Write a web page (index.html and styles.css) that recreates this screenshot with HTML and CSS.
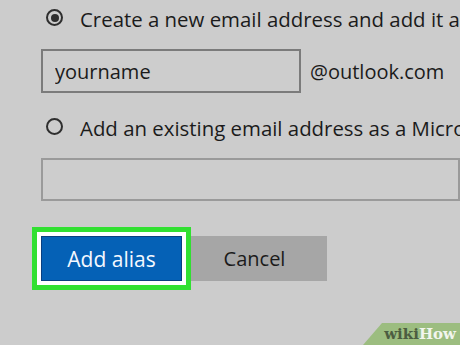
FILE: index.html
```html
<!DOCTYPE html>
<html>

<head>
    <meta charset="utf-8">
    <title>Add alias</title>
    <link rel="stylesheet" href="styles.css">
</head>

<body>
    <div id="form">
        <label class="option">
            <span class="radio checked"></span>
            <span class="caption">Create a new email address and add it as an alias</span>
        </label>
        <div class="field">
            <input type="text" class="box" value="yourname">
            <span class="suffix">@outlook.com</span>
        </div>
        <label class="option">
            <span class="radio"></span>
            <span class="caption">Add an existing email address as a Microsoft account alias</span>
        </label>
        <div class="field">
            <input type="text" class="box wide" disabled>
        </div>
        <div id="actions">
            <button class="primary">Add alias</button>
            <button class="secondary">Cancel</button>
        </div>
    </div>
    <div id="badge"><span class="wiki">wiki</span><span class="how">How</span></div>
</body>

</html>
```
FILE: styles.css
```css
html,
body {
    margin: 0;
    padding: 0;
    height: 100%;
    overflow: hidden;
    background: #cccccc;
    font-family: "Open Sans", "Noto Sans", sans-serif;
    font-size: 20px;
    color: #1b1b1b;
}

#form {
    display: flex;
    flex-direction: column;
    padding-left: 41px;
}

.option {
    display: flex;
    align-items: center;
    height: 35px;
    padding-left: 5px;
    white-space: nowrap;

    & + .field {
        margin-top: 14px;
    }
}

.field + .option {
    margin-top: 16px;
}

.radio {
    box-sizing: border-box;
    width: 17px;
    height: 17px;
    border: 2px solid #2e2e2e;
    border-radius: 50%;
    margin-right: 17px;
    display: flex;
    align-items: center;
    justify-content: center;
    flex: none;

    &.checked::after {
        content: "";
        width: 8px;
        height: 8px;
        border-radius: 50%;
        background: #2e2e2e;
    }
}

.caption {
    font-size: 20.4px;
    padding-top: 3px;
}

.field {
    display: flex;
    align-items: center;
    gap: 9px;
}

.box {
    box-sizing: border-box;
    width: 260px;
    height: 44px;
    margin: 0;
    padding: 0 12px;
    border: 2px solid #7b7b7b;
    background: #cdcdcd;
    font: inherit;
    color: #1b1b1b;

    &.wide {
        width: 440px;
        height: 43px;
        border-color: #9a9a9a;
    }
}

#actions {
    display: flex;
    margin-top: 35px;

    & button {
        box-sizing: border-box;
        height: 45px;
        margin: 0;
        border: none;
        font: inherit;
    }
}

.primary {
    position: relative;
    z-index: 1;
    width: 141px;
    background: #0561b6;
    border: 1px solid #0b3f80 !important;
    color: #f4f8ff;
    font-size: 21px !important;
    box-shadow: 0 0 0 4px #ffffff, 0 0 0 9px #31e031;
}

.secondary {
    width: 145px;
    background: #a6a6a6;
    color: #1b1b1b;
}

#badge {
    position: absolute;
    right: 0;
    bottom: 0;
    width: 97px;
    height: 22px;
    background: #9cbd80;
    clip-path: polygon(19px 0, 100% 0, 100% 100%, 0 100%);
    font-family: "DejaVu Serif", serif;
    font-weight: bold;
    font-size: 15px;
    line-height: 22px;
    text-align: right;
    padding-right: 4px;
    box-sizing: border-box;

    & .wiki {
        color: #4c5d41;
    }

    & .how {
        color: #f2f5ee;
    }
}
```
